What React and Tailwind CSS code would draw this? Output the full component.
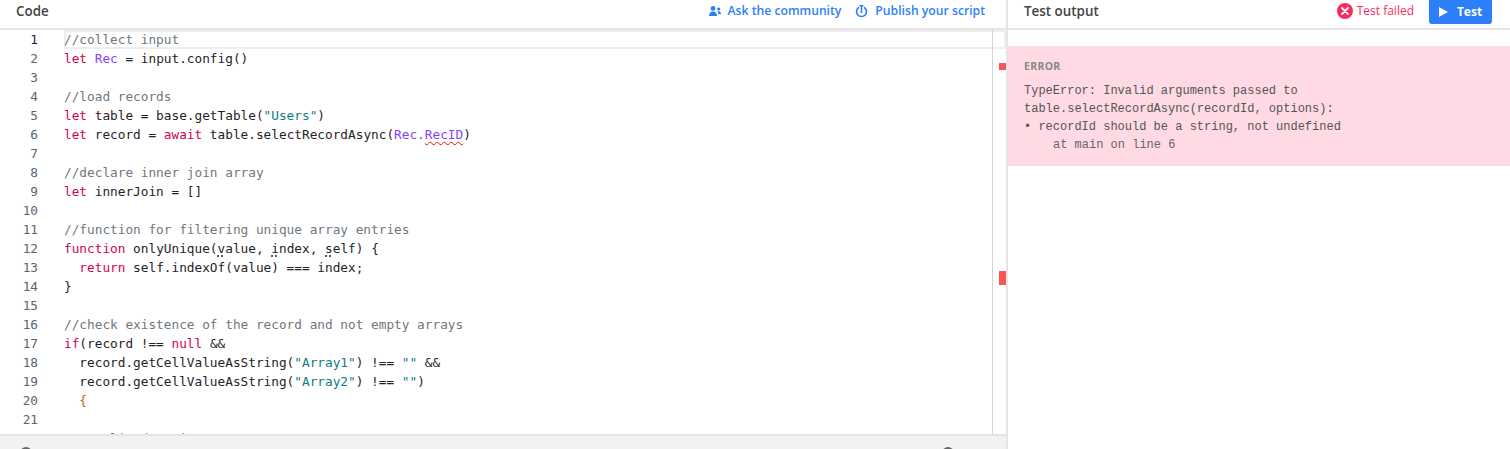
const KW = "text-[#d6004f]";
const VAR = "text-[#8a3ffc]";
const STR = "text-[#0e7c86]";
const CM = "text-[#6e7781]";
const BR = "text-[#b5651d]";

function Squiggle({ children }) {
  return <span className="underline decoration-wavy decoration-[#e51400] decoration-1 underline-offset-2">{children}</span>;
}

function Dotted({ children }) {
  return <span className="underline decoration-dotted decoration-[#555555] decoration-2 underline-offset-2">{children}</span>;
}

const lines = [
  <span className={CM}>//collect input</span>,
  <><span className={KW}>let</span> <span className={VAR}>Rec</span> = input.config()</>,
  null,
  <span className={CM}>//load records</span>,
  <><span className={KW}>let</span> table = base.getTable(<span className={STR}>"Users"</span>)</>,
  <><span className={KW}>let</span> record = <span className={KW}>await</span> table.selectRecordAsync(<span className={VAR}>Rec.<Squiggle>RecID</Squiggle></span>)</>,
  null,
  <span className={CM}>//declare inner join array</span>,
  <><span className={KW}>let</span> innerJoin = []</>,
  null,
  <span className={CM}>//function for filtering unique array entries</span>,
  <><span className={KW}>function</span> onlyUnique(<Dotted>v</Dotted>alue, <Dotted>i</Dotted>ndex, <Dotted>s</Dotted>elf) {"{"}</>,
  <>  <span className={KW}>return</span> self.indexOf(value) === index;</>,
  <>{"}"}</>,
  null,
  <span className={CM}>//check existence of the record and not empty arrays</span>,
  <><span className={KW}>if</span>(record !== <span className={KW}>null</span> &&</>,
  <>  record.getCellValueAsString(<span className={STR}>"Array1"</span>) !== <span className={STR}>""</span> &&</>,
  <>  record.getCellValueAsString(<span className={STR}>"Array2"</span>) !== <span className={STR}>""</span>)</>,
  <>  <span className={BR}>{"{"}</span></>,
  null,
  <span className={CM}>  //split data in arrays</span>,
];

export default function App() {
  return (
    <div className="flex h-[449px] w-[1510px] overflow-hidden bg-white font-['Open_Sans',sans-serif]">
      <div className="flex w-[1008px] flex-col border-r-2 border-[#e5e5e5]">
        <div className="flex h-[30px] shrink-0 items-start justify-between border-b-2 border-[#e5e5e5] pl-4 pr-[21px]">
          <span className="mt-[2px] text-[13.4px] leading-[18px] font-semibold text-[#444444]">Code</span>
          <div className="mt-[1px] flex gap-[14px] text-[12.2px] leading-[20px] font-semibold text-[#2d7ff9]">
            <span className="flex items-center gap-[7px]">
              <svg width="12" height="10" viewBox="0 0 12 10" fill="#2d7ff9">
                <circle cx="4" cy="2.4" r="2.4" />
                <path d="M0 10c0-3 1.600-4.500 4-4.500s4 1.500 4 4.500z" />
                <circle cx="9.700" cy="3" r="1.600" />
                <path d="M9 5.200c1.700-.3 3 .8 3 3H9.300c0-1-.2-2.200-.9-2.700z" />
              </svg>
              Ask the community
            </span>
            <span className="flex items-center gap-[7px]">
              <svg width="13" height="13" viewBox="0 0 13 13" fill="none" stroke="#2d7ff9" strokeWidth="1.600">
                <path d="M4 2.200a5 5 0 1 0 5 0" />
                <path d="M6.500 0.500v7.500M4.500 0.800h4" />
              </svg>
              Publish your script
            </span>
          </div>
        </div>

        <div className="flex min-h-0 flex-1">
          <div className="w-[38px] shrink-0 text-right font-['DejaVu_Sans_Mono',monospace] text-[12.75px] leading-[19px] text-[#5b6470]">
            {lines.map((_, i) => (
              <div key={i} className={i === 0 ? "text-[#1b1464]" : ""}>{i + 1}</div>
            ))}
          </div>
          <div className="relative min-w-0 flex-1 overflow-hidden pl-[26px] font-['DejaVu_Sans_Mono',monospace] text-[12.75px] leading-[19px] text-[#1f2328]">
            <div className="absolute top-0 right-0 left-[26px] h-[19px] border-2 border-[#eeeeee]" />
            <div className="absolute top-0 right-[13px] bottom-0 w-px bg-[#d4d4d4]" />
            <div className="absolute top-[33px] right-0 h-[7px] w-[7px] bg-[#fa5555]" />
            <div className="absolute top-[241px] right-0 h-[14px] w-[7px] bg-[#fa5555]" />
            {lines.map((line, i) => (
              <div key={i} className="relative h-[19px] whitespace-pre">{line}</div>
            ))}
          </div>
        </div>

        <div className="relative h-[15px] shrink-0 border-t-2 border-[#e5e5e5] bg-[#f2f2f2]">
          <div className="absolute top-[11px] left-[20px] h-3 w-3 rounded-full bg-[#666666]" />
          <div className="absolute top-[11px] left-[942px] h-3 w-3 rounded-full bg-[#666666]" />
        </div>
      </div>

      <div className="flex min-w-0 flex-1 flex-col">
        <div className="flex h-[30px] shrink-0 items-start border-b-2 border-[#e5e5e5] pl-4 pr-[18px]">
          <span className="mt-[2px] text-[13.4px] leading-[18px] font-semibold text-[#444444]">Test output</span>
          <span className="mt-[2px] ml-auto flex items-center gap-1 text-[12px] leading-[18px] text-[#f82b60]">
            <svg width="16" height="16" viewBox="0 0 16 16">
              <circle cx="8" cy="8" r="8" fill="#f82b60" />
              <path d="M5 5l6 6M11 5l-6 6" stroke="#ffffff" strokeWidth="1.800" strokeLinecap="round" />
            </svg>
            Test failed
          </span>
          <button className="ml-[15px] flex h-6 w-[63px] items-center justify-center gap-[9px] rounded-b-[3px] bg-[#2d7ff9] text-[12px] font-bold text-white">
            <svg width="9" height="10" viewBox="0 0 9 10" fill="#ffffff"><path d="M0 0l9 5L0 10z" /></svg>
            Test
          </button>
        </div>
        <div className="mt-4 h-[120px] bg-[#ffd9e4] px-4 pt-[12px]">
          <div className="text-[10.500px] leading-[16px] font-bold tracking-[0.3px] text-[#888888]">ERROR</div>
          <div className="mt-[8px] font-['Liberation_Mono',monospace] text-[12px] leading-[18px] text-[#555555]">
            <div>TypeError: Invalid arguments passed to</div>
            <div>table.selectRecordAsync(recordId, options):</div>
            <div>• recordId should be a string, not undefined</div>
            <div className="pl-[29px] text-[#666666]">at main on line 6</div>
          </div>
        </div>
      </div>
    </div>
  );
}
